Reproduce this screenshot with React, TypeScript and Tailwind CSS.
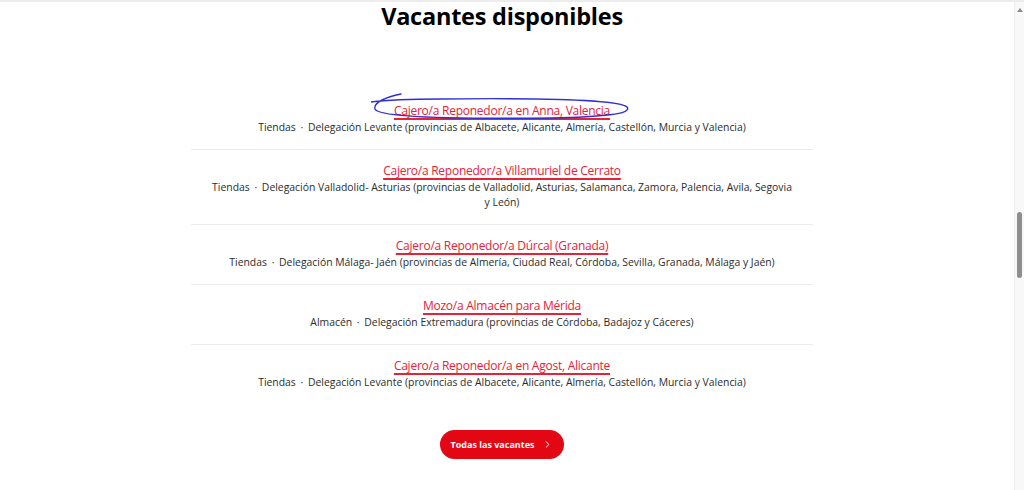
import { ChevronRight } from 'lucide-react'

const jobs = [
  {
    title: 'Cajero/a Reponedor/a en Anna, Valencia',
    area: 'Tiendas',
    region: 'Delegación Levante (provincias de Albacete, Alicante, Almería, Castellón, Murcia y Valencia)',
  },
  {
    title: 'Cajero/a Reponedor/a Villamuriel de Cerrato',
    area: 'Tiendas',
    region:
      'Delegación Valladolid- Asturias (provincias de Valladolid, Asturias, Salamanca, Zamora, Palencia, Avila, Segovia y León)',
  },
  {
    title: 'Cajero/a Reponedor/a Dúrcal (Granada)',
    area: 'Tiendas',
    region: 'Delegación Málaga- Jaén (provincias de Almería, Ciudad Real, Córdoba, Sevilla, Granada, Málaga y Jaén)',
  },
  {
    title: 'Mozo/a Almacén para Mérida',
    area: 'Almacén',
    region: 'Delegación Extremadura (provincias de Córdoba, Badajoz y Cáceres)',
  },
  {
    title: 'Cajero/a Reponedor/a en Agost, Alicante',
    area: 'Tiendas',
    region: 'Delegación Levante (provincias de Albacete, Alicante, Almería, Castellón, Murcia y Valencia)',
  },
]

export default function App() {
  return (
    <div className="flex h-[490px] w-full overflow-hidden border-t-2 border-[#ececec] bg-white font-['Open_Sans',sans-serif]">
      {/* page */}
      <main className="flex flex-1 flex-col items-center pr-[10px]">
        <h2 className="text-[23.5px] leading-[28px] font-bold tracking-[-0.01em] text-black">Vacantes disponibles</h2>

        <ul className="mt-[60px] w-[622px] divide-y divide-[#ececec]">
          {jobs.map((job, i) => (
            <li key={job.title} className="relative flex flex-col items-center px-[18px] pt-3 pb-[14px] text-center">
              <a
                href="#"
                className="text-[12px] leading-[18px] tracking-[-0.25px] text-[#e52238] underline decoration-[#e52238] decoration-[1.5px] underline-offset-[3px]"
              >
                {job.title}
              </a>
              <p className="text-[10.4px] leading-[15px] text-[#2b2b2b]">
                {job.area} <span className="mx-[2px]">·</span> {job.region}
              </p>

              {/* pen annotation round the first title */}
              {i === 0 && (
                <svg
                  className="pointer-events-none absolute top-[2px] left-[180px]"
                  width="264"
                  height="30"
                  viewBox="0 0 264 30"
                  fill="none"
                >
                  <path
                    d="M30 2 C 16 5, 2 10, 4 17 C 7 26, 90 27, 180 26 C 230 25, 262 22, 256 15 C 248 7, 150 6, 70 7 C 40 7, 15 8, 0 10"
                    stroke="#2f2fd6"
                    strokeWidth="1.4"
                    strokeLinecap="round"
                  />
                </svg>
              )}
            </li>
          ))}
        </ul>

        <button className="mt-[26px] flex h-[29px] w-[124px] items-center justify-center gap-[8px] rounded-full bg-[#e30613] text-[9px] font-bold text-white">
          Todas las vacantes
          <ChevronRight size={11} strokeWidth={2} />
        </button>
      </main>

      {/* browser scrollbar */}
      <div className="flex w-[10px] shrink-0 flex-col items-center border-l border-[#eeeeee] bg-[#f8f8f8]">
        <div className="mt-[6px] h-0 w-0 border-x-[3px] border-b-[4px] border-x-transparent border-b-[#8a8a8a]" />
        <div className="mt-[200px] h-[66px] w-[5px] rounded-full bg-[#8e8e8e]" />
      </div>
    </div>
  )
}
